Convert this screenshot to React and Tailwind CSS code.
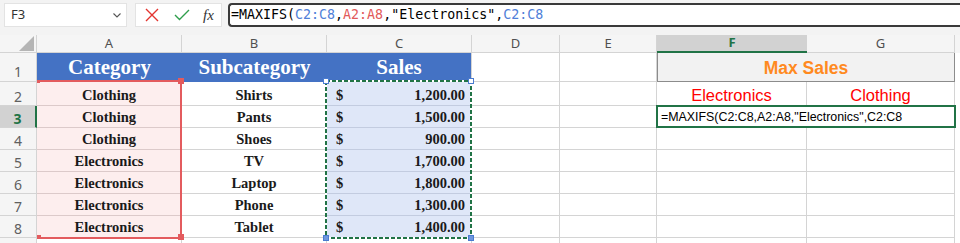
import React from "react";

// ── sheet data ────────────────────────────────────────────────────────────────
const rows = [
  ["Clothing", "Shirts", "1,200.00"],
  ["Clothing", "Pants", "1,500.00"],
  ["Clothing", "Shoes", "900.00"],
  ["Electronics", "TV", "1,700.00"],
  ["Electronics", "Laptop", "1,800.00"],
  ["Electronics", "Phone", "1,300.00"],
  ["Electronics", "Tablet", "1,400.00"],
];

const ui = { fontFamily: '"Noto Sans", "Open Sans", sans-serif' };
const serif = { fontFamily: '"Liberation Serif", "Times New Roman", serif' };
const calibri = { fontFamily: '"Liberation Sans", Arial, sans-serif' };
const mono = { fontFamily: '"DejaVu Sans Mono", "Liberation Mono", monospace' };

// ── small pieces ──────────────────────────────────────────────────────────────
function RowHead({ n, active, pad = "pt-[3px]" }) {
  return (
    <div
      style={ui}
      className={
        active
          ? `bg-[#d2d2d2] border-b border-[#d4d4d4] border-r-2 border-r-[#217346] text-[#217346] font-bold text-[14px] flex items-center justify-center ${pad}`
          : `bg-[#f5f5f5] border-b border-r border-[#d4d4d4] text-[#606060] text-[14px] flex items-center justify-center ${pad}`
      }
    >
      {n}
    </div>
  );
}

function Blank() {
  return <div className="bg-white border-b border-r border-[#d4d4d4]" />;
}

function Filler() {
  return <div className="bg-white" />;
}

function ColHead({ label, active }) {
  return (
    <div
      style={ui}
      className={
        active
          ? "bg-[#d2d2d2] border-b-2 border-[#217346] text-[#217346] font-bold text-[13px] flex items-center justify-center"
          : "bg-[#f5f5f5] border-b border-r border-[#d4d4d4] text-[#505050] text-[13px] flex items-center justify-center"
      }
    >
      {label}
    </div>
  );
}

// ── main ──────────────────────────────────────────────────────────────────────
export default function App() {
  return (
    <div className="w-[960px] h-[243px] overflow-hidden bg-white">
      {/* formula bar */}
      <div className="h-[35px] bg-[#f3f3f3] flex items-start pt-[3px] pl-[4px]">
        <div
          style={ui}
          className="w-[123px] h-[24px] bg-white border border-[#e3e3e3] flex items-center justify-between pl-[6px] pr-[5px] text-[13px] text-[#333]"
        >
          <span>F3</span>
          <svg width="8" height="5" viewBox="0 0 8 5">
            <path d="M0.5 0.5 L4 4 L7.5 0.5" stroke="#555" strokeWidth="1.1" fill="none" />
          </svg>
        </div>
        <div className="ml-[8px] w-[87px] h-[24px] bg-white border border-[#e3e3e3] flex items-center">
          <svg className="ml-[9px]" width="14" height="14" viewBox="0 0 14 14">
            <path d="M1 1 L13 13 M13 1 L1 13" stroke="#e3342f" strokeWidth="1.4" />
          </svg>
          <svg className="ml-[15px]" width="16" height="12" viewBox="0 0 16 12">
            <path d="M1 6 L5.5 10.5 L15 1" stroke="#2f9e4c" strokeWidth="1.4" fill="none" />
          </svg>
          <span style={serif} className="ml-[13px] italic text-[15px] text-[#333] leading-none">
            <i>f</i>x
          </span>
        </div>
        <div
          style={mono}
          className="ml-[6px] flex-1 h-[24px] bg-white border-2 border-r-0 border-[#3a3a3a] rounded-l-[4px] flex items-center pl-[1px] text-[13.3px] text-black whitespace-nowrap"
        >
          <span>=MAXIFS(</span>
          <span className="text-[#4f80d8]">C2:C8</span>
          <span>,</span>
          <span className="text-[#e25a5a]">A2:A8</span>
          <span>,"Electronics",</span>
          <span className="text-[#4f80d8]">C2:C8</span>
        </div>
      </div>

      {/* sheet */}
      <div className="relative">
        <div className="grid grid-cols-[37px_145px_145px_145px_88px_97px_150px_148px_5px] grid-rows-[18px_29px_24px_22px_22px_22px_22px_22px_22px_22px]">
          {/* column headers */}
          <div className="bg-[#f5f5f5] border-b border-r border-[#d4d4d4] flex items-end justify-end pr-[2px] pb-[1px]">
            <div className="w-0 h-0 border-l-[15px] border-l-transparent border-b-[15px] border-b-[#b5b5b5]" />
          </div>
          {["A", "B", "C", "D", "E"].map((c) => (
            <ColHead key={c} label={c} />
          ))}
          <ColHead label="F" active />
          <ColHead label="G" />
          <div className="bg-[#f5f5f5]" />

          {/* row 1 */}
          <RowHead n={1} pad="pt-[8px]" />
          {["Category", "Subcategory", "Sales"].map((t, i) => (
            <div
              key={t}
              style={serif}
              className={`bg-[#4472c4] border-b border-[#4472c4] ${
                i === 2 ? "border-r border-r-[#d4d4d4]" : ""
              } text-white font-bold text-[21px] flex items-center justify-center pt-[2px]`}
            >
              {t}
            </div>
          ))}
          <Blank />
          <Blank />
          <div
            style={calibri}
            className="col-span-2 bg-[#f2f2f2] border border-t-0 border-[#8c8c8c] text-[#ff8a1f] font-bold text-[17.5px] flex items-center justify-center pt-[2px]"
          >
            Max Sales
          </div>
          <Filler />

          {/* rows 2..8 */}
          {rows.map(([cat, sub, amt], i) => {
            const r = i + 2;
            const pad = r === 2 ? "pt-[5px]" : "pt-[3px]";
            return (
              <React.Fragment key={r}>
                <RowHead n={r} active={r === 3} pad={pad} />
                <div
                  style={serif}
                  className={`bg-[#fdeeee] border-b border-r border-[#dccaca] text-[#1a1a1a] font-bold text-[14.5px] flex items-center justify-center ${pad}`}
                >
                  {cat}
                </div>
                <div
                  style={serif}
                  className={`bg-white border-b border-r border-[#d4d4d4] text-[#1a1a1a] font-bold text-[14.5px] flex items-center justify-center ${pad}`}
                >
                  {sub}
                </div>
                <div
                  style={serif}
                  className={`bg-[#dfe7f8] border-b border-r border-[#c3cce0] text-[#1a1a1a] font-bold text-[14.5px] flex items-center justify-between pl-[9px] pr-[6px] ${pad}`}
                >
                  <span>$</span>
                  <span>{amt}</span>
                </div>
                <Blank />
                <Blank />
                {r === 2 && (
                  <>
                    <div
                      style={calibri}
                      className="bg-white border-b border-r border-[#d4d4d4] text-[#ff0000] text-[16.5px] flex items-center justify-center pt-[3px]"
                    >
                      Electronics
                    </div>
                    <div
                      style={calibri}
                      className="bg-white border-b border-r border-[#d4d4d4] text-[#ff0000] text-[16.5px] flex items-center justify-center pt-[3px]"
                    >
                      Clothing
                    </div>
                  </>
                )}
                {r === 3 && (
                  <div
                    style={calibri}
                    className="col-span-2 bg-white text-black text-[12.4px] flex items-center pl-[4px] pt-[1px] whitespace-nowrap"
                  >
                    =MAXIFS(C2:C8,A2:A8,"Electronics",C2:C8
                  </div>
                )}
                {r > 3 && (
                  <>
                    <Blank />
                    <Blank />
                  </>
                )}
                <Filler />
              </React.Fragment>
            );
          })}

          {/* row 9, only its top edge is in view */}
          <div className="bg-[#f5f5f5] border-r border-[#d4d4d4]" />
          {[0, 1, 2, 3, 4, 5, 6].map((k) => (
            <Blank key={k} />
          ))}
          <Filler />
        </div>

        {/* A2:A8 formula range highlight */}
        <div className="absolute left-[37px] top-[45px] w-[145px] h-[159px] border-t-2 border-r-2 border-b-2 border-[#e35b5e]" />
        <div className="absolute left-[37px] top-[45px] w-[3px] h-[3px] bg-[#e35b5e]" />
        <div className="absolute left-[178px] top-[43px] w-[6px] h-[6px] bg-[#e35b5e]" />
        <div className="absolute left-[37px] top-[200px] w-[4px] h-[4px] bg-[#e35b5e]" />
        <div className="absolute left-[178px] top-[199px] w-[6px] h-[6px] bg-[#e35b5e]" />

        {/* C2:C8 copy marquee */}
        <svg className="absolute left-[325px] top-[45px]" width="147" height="159" viewBox="0 0 147 159">
          <rect x="1" y="1" width="145" height="157" fill="none" stroke="#ffffff" strokeWidth="2" />
          <rect x="1" y="1" width="145" height="157" fill="none" stroke="#217346" strokeWidth="2" strokeDasharray="4 2" />
        </svg>
        <div className="absolute left-[323px] top-[43px] w-[6px] h-[6px] bg-white border border-[#4a7bd0]" />
        <div className="absolute left-[468px] top-[43px] w-[6px] h-[6px] bg-white border border-[#4a7bd0]" />
        <div className="absolute left-[323px] top-[200px] w-[6px] h-[6px] bg-[#6f97de] border border-[#4a7bd0]" />
        <div className="absolute left-[468px] top-[200px] w-[6px] h-[6px] bg-[#6f97de] border border-[#4a7bd0]" />

        {/* F3:G3 active edit cell */}
        <div className="absolute left-[656px] top-[70px] w-[300px] h-[23px] border-2 border-[#217346]" />
      </div>
    </div>
  );
}
